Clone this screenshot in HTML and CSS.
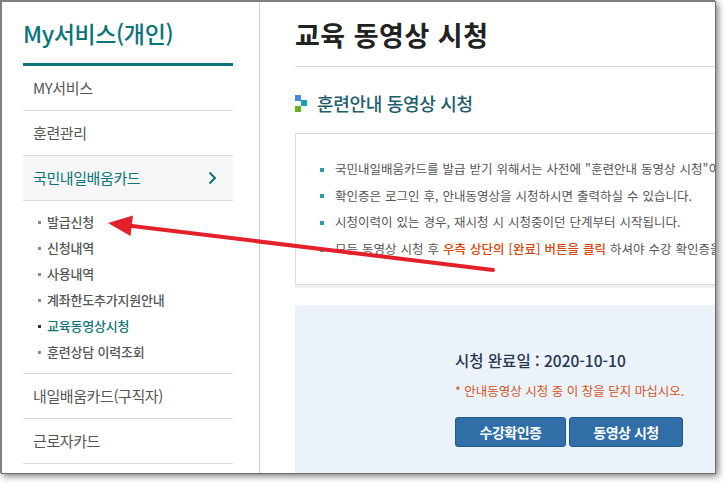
FILE: index.html
```html
<!DOCTYPE html>
<html lang="ko">
<head>
<meta charset="utf-8">
<title>교육 동영상 시청</title>
<link rel="stylesheet" href="styles.css">
</head>
<body>
<div class="window">
  <aside class="sidebar">
    <h2 class="side-title">My서비스(개인)</h2>
    <ul class="menu">
      <li class="menu-item">MY서비스</li>
      <li class="menu-item">훈련관리</li>
      <li class="menu-item active">
        <span>국민내일배움카드</span>
        <svg class="chev" width="9" height="14" viewBox="0 0 9 14"><path d="M1.5 1.5 L7 7 L1.5 12.5" fill="none" stroke="#0b7478" stroke-width="2"/></svg>
      </li>
      <li class="submenu">
        <ul>
          <li class="sub-item">발급신청</li>
          <li class="sub-item">신청내역</li>
          <li class="sub-item">사용내역</li>
          <li class="sub-item">계좌한도추가지원안내</li>
          <li class="sub-item current">교육동영상시청</li>
          <li class="sub-item">훈련상담 이력조회</li>
        </ul>
      </li>
      <li class="menu-item">내일배움카드(구직자)</li>
      <li class="menu-item">근로자카드</li>
    </ul>
  </aside>
  <main class="main">
    <h1 class="page-title">교육 동영상 시청</h1>
    <h3 class="sec-title">
      <span class="sec-icon"><i class="sq b"></i><i class="sq t"></i><i class="sq g"></i></span>
      훈련안내 동영상 시청
    </h3>
    <div class="info-box">
      <ul class="info-list">
        <li>국민내일배움카드를 발급 받기 위해서는 사전에 "훈련안내 동영상 시청"이 필요합니다.</li>
        <li>확인증은 로그인 후, 안내동영상을 시청하시면 출력하실 수 있습니다.</li>
        <li>시청이력이 있는 경우, 재시청 시 시청중이던 단계부터 시작됩니다.</li>
        <li>모든 동영상 시청 후 <em>우측 상단의 [완료] 버튼을 클릭</em> 하셔야 수강 확인증을 출력할 수 있습니다.</li>
      </ul>
    </div>
    <div class="watch-box">
      <p class="done-date">시청 완료일 : 2020-10-10</p>
      <p class="warn">* 안내동영상 시청 중 이 창을 닫지 마십시오.</p>
      <div class="btns">
        <button class="btn w1">수강확인증</button>
        <button class="btn w2">동영상 시청</button>
      </div>
    </div>
  </main>
</div>
<svg class="arrow" width="726" height="484" viewBox="0 0 726 484">
  <line x1="493" y1="270" x2="128" y2="225.5" stroke="#e4202a" stroke-width="4" stroke-linecap="round"/>
  <polygon points="108,223 133,215.5 130.5,236" fill="#e4202a"/>
</svg>
</body>
</html>
```

FILE: styles.css
```css
* { box-sizing: content-box; }
html, body { margin: 0; padding: 0; background: #ffffff; }
body {
  width: 726px;
  height: 484px;
  position: relative;
  overflow: hidden;
  font-family: "Noto Sans CJK KR", "Noto Sans", sans-serif;
}
ul { list-style: none; margin: 0; padding: 0; }
h1, h2, h3, p { margin: 0; }

.window {
  width: 713px;
  height: 471px;
  border-top: 2px solid #808080;
  border-left: 2px solid #808080;
  box-shadow: 1px 1px 0 #6d6d6d, 3px 3px 7px rgba(0,0,0,0.55);
  overflow: hidden;
  display: flex;
  background: #fff;
}

/* sidebar */
.sidebar {
  width: 210px;
  flex-shrink: 0;
  padding: 0 26px 0 21px;
  border-right: 1px solid #cfcfcf;
}
.side-title {
  padding: 16px 0 15px;
  font-size: 23px;
  line-height: 30px;
  font-weight: 500;
  letter-spacing: -0.4px;
  color: #0b7478;
  border-bottom: 3px solid #0b7478;
}
.menu-item {
  height: 44px;
  line-height: 44px;
  padding-left: 10px;
  font-size: 15px;
  letter-spacing: -0.4px;
  color: #555;
  border-bottom: 1px solid #dcdcdc;
}
.menu-item.active {
  background: #f7f7f7;
  color: #0b7478;
  display: flex;
  justify-content: space-between;
  align-items: center;
  padding-right: 16px;
}
.submenu {
  padding: 8px 0 8px 15px;
  border-bottom: 1px solid #dcdcdc;
}
.sub-item {
  height: 26px;
  line-height: 26px;
  font-size: 13px;
  font-weight: 500;
  letter-spacing: -0.2px;
  color: #555;
}
.sub-item::before {
  content: "";
  display: inline-block;
  width: 3px;
  height: 3px;
  background: #8a8a8a;
  margin-right: 6px;
  vertical-align: middle;
  position: relative;
  top: -1px;
}
.sub-item.current { color: #0b7478; }
.sub-item.current::before { background: #333; }

/* main */
.main {
  width: 640px;
  flex-shrink: 0;
  padding-left: 35px;
}
.page-title {
  padding: 16px 0 14px;
  font-size: 27px;
  line-height: 34px;
  font-weight: 700;
  letter-spacing: 0.5px;
  color: #222;
  border-bottom: 1px solid #dcdcdc;
}
.sec-title {
  margin-top: 24px;
  display: flex;
  align-items: center;
  font-size: 18px;
  line-height: 24px;
  font-weight: 500;
  letter-spacing: -0.3px;
  color: #1d5d6c;
}
.sec-icon {
  display: grid;
  grid-template-columns: 6px 6px;
  grid-template-rows: 6px 5px 6px;
  width: 12px;
  height: 17px;
  margin-right: 10px;
}
.sq { display: block; }
.sq.b { grid-column: 1; grid-row: 1; background: #4a88e0; }
.sq.t { grid-column: 2; grid-row: 2 / span 1; background: #17a3ad; height: 6px; margin-top: -1px; }
.sq.g { grid-column: 1; grid-row: 3; background: #67b01f; }

.info-box {
  margin-top: 18px;
  border: 1px solid #dcdcdc;
  box-shadow: 0 3px 0 #f1f1f1;
  padding: 22px 0 21px 24px;
}
.info-list li {
  line-height: 26.7px;
  font-size: 12.5px;
  word-spacing: 0.5px;
  color: #555;
  white-space: nowrap;
}
.info-list li::before {
  content: "";
  display: inline-block;
  width: 4px;
  height: 4px;
  background: #2a9fa3;
  margin-right: 11px;
  vertical-align: middle;
  position: relative;
  top: -1px;
}
.info-list em {
  font-style: normal;
  font-weight: 500;
  color: #d6460c;
}

.watch-box {
  margin-top: 20px;
  background: #ebf2f9;
  height: 200px;
  padding: 43px 0 0 160px;
}
.done-date {
  font-size: 15.5px;
  line-height: 24px;
  font-weight: 500;
  color: #263552;
}
.warn {
  margin-top: 9px;
  font-size: 12.5px;
  line-height: 20px;
  color: #d2521c;
}
.btns {
  margin-top: 16px;
  display: flex;
  gap: 3px;
}
.btn {
  box-sizing: border-box;
  height: 30px;
  padding: 0;
  border: 1px solid #245b8d;
  border-radius: 3px;
  background: #2f6ea6;
  color: #fff;
  font-family: "Noto Sans CJK KR", "Noto Sans", sans-serif;
  font-size: 14px;
  font-weight: 700;
  letter-spacing: -0.5px;
}
.btn.w1 { width: 111px; }
.btn.w2 { width: 114px; }

.arrow {
  position: absolute;
  left: 0;
  top: 0;
  pointer-events: none;
}
```
